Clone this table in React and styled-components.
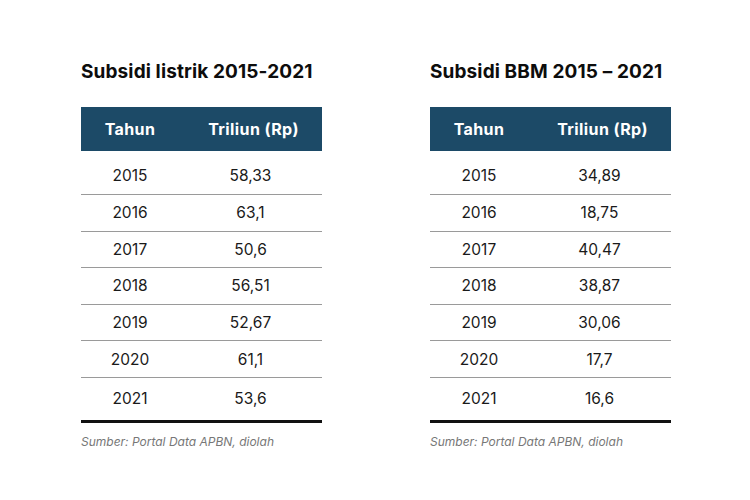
import React from 'react';
import styled, { createGlobalStyle } from 'styled-components';

const GlobalStyle = createGlobalStyle`
  body { margin: 0; background: #fff; font-family: Inter, "Noto Sans", sans-serif; }
`;

const listrik = [
  ['2015', '58,33'], ['2016', '63,1'], ['2017', '50,6'], ['2018', '56,51'],
  ['2019', '52,67'], ['2020', '61,1'], ['2021', '53,6'],
];
const bbm = [
  ['2015', '34,89'], ['2016', '18,75'], ['2017', '40,47'], ['2018', '38,87'],
  ['2019', '30,06'], ['2020', '17,7'], ['2021', '16,6'],
];

const Page = styled.div`
  width: 750px;
  height: 500px;
  box-sizing: border-box;
  padding: 60px 0 0 81px;
  display: flex;
  gap: 108px;
`;

const Block = styled.div`
  width: 241px;
`;

const Title = styled.h2`
  margin: 0 0 23px;
  font-size: 19px;
  line-height: 24px;
  font-weight: 700;
  color: #0d0d0d;
  white-space: nowrap;
  letter-spacing: 0.12px;
`;

const Grid = styled.div`
  display: grid;
  grid-template-columns: 98px 1fr;
  border-bottom: 3px solid #111;
`;

const Head = styled.div`
  height: 44px;
  background: #1c4a67;
  color: #fff;
  font-size: 16px;
  font-weight: 700;
  letter-spacing: 0.4px;
  display: flex;
  align-items: center;
  justify-content: center;
  padding-left: ${p => (p.$right ? '6px' : '0')};
`;

const Cell = styled.div`
  height: ${p => p.$h}px;
  display: flex;
  align-items: center;
  justify-content: center;
  font-size: 15.5px;
  color: #1a1a1a;
  border-bottom: ${p => (p.$last ? 'none' : '1px solid #9a9a9a')};
  box-sizing: border-box;
  padding-top: ${p => (p.$first ? '6px' : '0')};
`;

const Source = styled.p`
  margin: 11px 0 0;
  font-size: 12px;
  font-style: italic;
  color: #777;
`;

const Table = ({ title, rows }) => (
  <Block>
    <Title>{title}</Title>
    <Grid>
      <Head>Tahun</Head>
      <Head $right>Triliun (Rp)</Head>
      {rows.map(([y, v], i) => {
        const first = i === 0;
        const last = i === rows.length - 1;
        const h = first ? 44 : last ? 42 : 36.6;
        return (
          <React.Fragment key={y}>
            <Cell $h={h} $first={first} $last={last}>{y}</Cell>
            <Cell $h={h} $first={first} $last={last}>{v}</Cell>
          </React.Fragment>
        );
      })}
    </Grid>
    <Source>Sumber: Portal Data APBN, diolah</Source>
  </Block>
);

export default function App() {
  return (
    <>
      <GlobalStyle />
      <Page>
        <Table title="Subsidi listrik 2015-2021" rows={listrik} />
        <Table title="Subsidi BBM 2015 – 2021" rows={bbm} />
      </Page>
    </>
  );
}
